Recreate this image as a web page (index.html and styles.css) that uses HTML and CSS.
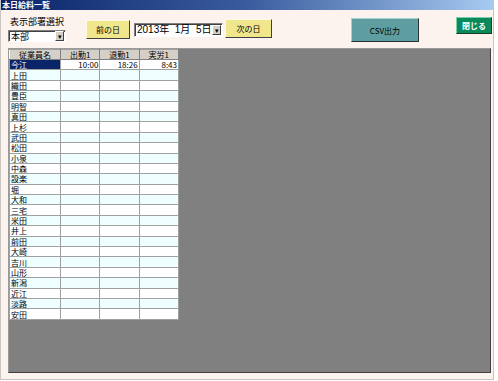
FILE: index.html
```html
<!DOCTYPE html>
<html lang="ja">
<head>
    <meta charset="UTF-8">
    <title>本日給料一覧</title>
    <link rel="stylesheet" href="styles.css">
</head>
<body>
    <div class="window">
        <div class="titlebar">本日給料一覧</div>
        <div class="toolbar">
            <div class="dept">
                <div class="dept-label">表示部署選択</div>
                <div class="combo dept-combo">
                    <span class="combo-text">本部</span>
                    <span class="combo-arrow">▾</span>
                </div>
            </div>
            <button class="btn btn-day btn-prev">前の日</button>
            <div class="combo date-combo">
                <span class="combo-text">2013年&nbsp;&nbsp;1月&nbsp;&nbsp;5日</span>
                <span class="combo-arrow">▾</span>
            </div>
            <button class="btn btn-day btn-next">次の日</button>
            <button class="btn btn-csv">CSV出力</button>
            <button class="btn btn-close">閉じる</button>
        </div>
        <div class="grid-panel">
            <table class="grid">
                <thead>
                    <tr>
                        <th class="col-name">従業員名</th>
                        <th>出勤1</th>
                        <th>退勤1</th>
                        <th>実労1</th>
                    </tr>
                </thead>
                <tbody id="grid-body"></tbody>
            </table>
        </div>
    </div>

    <script>
        const names = ['今江', '上田', '織田', '豊臣', '明智', '真田', '上杉', '武田', '松田', '小泉', '中森',
            '設楽', '堀', '大和', '三宅', '米田', '井上', '前田', '大崎', '吉川', '山形', '新潟', '近江', '淡路', '安田'];
        const body = document.getElementById('grid-body');

        // 行を作る
        names.forEach((name, i) => {
            const tr = document.createElement('tr');
            if (i % 2 === 1) tr.classList.add('alt');
            const times = i === 0 ? ['10:00', '18:26', '8:43'] : ['', '', ''];
            tr.innerHTML = `<td class="col-name${i === 0 ? ' selected' : ''}">${name}</td>` +
                times.map(t => `<td class="num">${t}</td>`).join('');
            body.appendChild(tr);
        });
    </script>
</body>
</html>
```

FILE: styles.css
```css
body {
    margin: 0;
    font-family: "MS UI Gothic", "Noto Sans CJK JP", sans-serif;
    font-size: 9px;
    background-color: #ffffff;
}
.window {
    width: 494px;
    height: 380px;
    box-sizing: border-box;
    background-color: #fdf3ee;
    border-right: 1px solid #c8c4c0;
    border-bottom: 1px solid #c8c4c0;
    border-left: 1px solid #c8c4c0;
}
.titlebar {
    height: 10px;
    line-height: 10px;
    padding-left: 1px;
    color: white;
    font-size: 8px;
    font-weight: bold;
    background: linear-gradient(to right, #0a246a, #3a5c9e 50%, #a6caf0);
}
.toolbar {
    display: flex;
    align-items: flex-start;
    height: 38px;
    padding-left: 7px;
}
.dept {
    margin-top: 6px;
}
.dept-label {
    height: 11px;
    line-height: 11px;
    padding-left: 2px;
    font-size: 9px;
    color: #000;
}
.combo {
    display: flex;
    align-items: center;
    box-sizing: border-box;
    background: white;
    border: 1px solid;
    border-color: #808080 #ffffff #ffffff #808080;
    box-shadow: inset 1px 1px 0 #404040;
}
.combo-text {
    flex: 1;
    padding-left: 2px;
    white-space: nowrap;
    overflow: hidden;
}
.combo-arrow {
    width: 7px;
    height: 8px;
    margin-right: 1px;
    line-height: 8px;
    text-align: center;
    font-size: 7px;
    background: #d4d0c8;
    border: 1px solid;
    border-color: #ffffff #404040 #404040 #ffffff;
}
.dept-combo {
    width: 58px;
    height: 12px;
    margin-top: 3px;
}
.dept-combo .combo-text {
    font-size: 9px;
    line-height: 11px;
}
.date-combo {
    width: 89px;
    height: 14px;
    margin-top: 13px;
    margin-left: 4px;
}
.date-combo .combo-text {
    font-family: "Liberation Sans", "Noto Sans CJK JP", sans-serif;
    font-size: 10px;
    line-height: 12px;
}
.btn {
    box-sizing: border-box;
    padding: 0;
    font-family: inherit;
    font-size: 8px;
    color: #000;
    border: 1px solid;
    border-color: #fffbe0 #404040 #404040 #fffbe0;
    cursor: pointer;
}
.btn-day {
    width: 44px;
    height: 19px;
    background-color: #f0e68c;
}
.btn-prev {
    margin-top: 10px;
    margin-left: 20px;
}
.btn-next {
    margin-top: 9px;
    margin-left: 2px;
    width: 47px;
}
.btn-csv {
    width: 68px;
    height: 24px;
    margin-top: 8px;
    margin-left: 79px;
    background-color: #5f9ea0;
    border-color: #a8d0d0 #303030 #303030 #a8d0d0;
}
.btn-close {
    width: 36px;
    height: 17px;
    margin-top: 7px;
    margin-left: 37px;
    color: white;
    font-weight: bold;
    background-color: #0a8a5a;
    border-color: #7ad0a8 #1a3a2a #1a3a2a #7ad0a8;
}
.grid-panel {
    height: 325px;
    margin: 0 2px 0 7px;
    box-sizing: border-box;
    background-color: #808080;
    border: 1px solid;
    border-color: #9a9a9a #404040 #404040 #9a9a9a;
}
.grid {
    border-collapse: collapse;
    table-layout: fixed;
    width: 170px;
    font-size: 8px;
}
.grid th,
.grid td {
    height: 9.4px;
    padding: 0 1px;
    border: 1px solid #a0a0a0;
    line-height: 9px;
    white-space: nowrap;
    overflow: hidden;
}
.grid th {
    height: 9px;
    font-weight: normal;
    text-align: center;
    background-color: #d4d0c8;
    border-color: #a0a0a0 #808080 #808080 #ffffff;
}
.grid th.col-name {
    width: 48px;
}
.grid td {
    background-color: white;
}
.grid tr.alt td {
    background-color: #efffff;
}
.grid td.num {
    text-align: right;
}
.grid td.selected {
    background-color: #0a246a;
    color: white;
}
```
